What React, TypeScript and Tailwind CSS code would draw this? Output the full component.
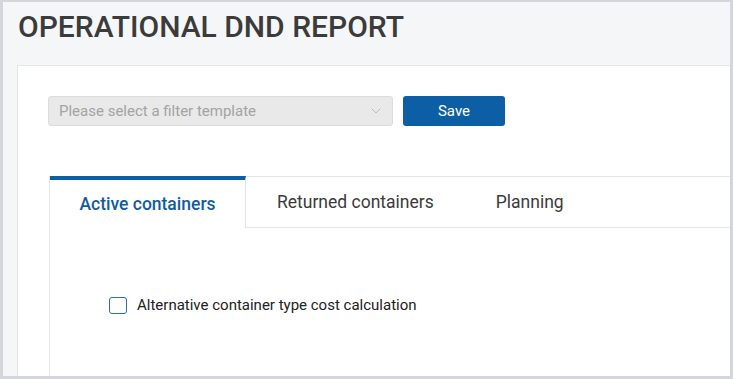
import { ChevronDown } from "lucide-react";

const tabs = ["Active containers", "Returned containers", "Planning"];

export default function App() {
  return (
    <div
      className="w-[733px] h-[379px] overflow-hidden flex flex-col bg-[#f5f6f8] border-[#d3d6da] border-t-[2px] border-l-[3px] border-r-[3px] border-b-[3px]"
      style={{ fontFamily: "Roboto, 'Liberation Sans', sans-serif" }}
    >
      {/* Page title */}
      <h1 className="pl-[15px] pt-[7px] mb-[20px] text-[30px] leading-[36px] font-medium text-[#3b3b3b]">
        OPERATIONAL DND REPORT
      </h1>

      {/* Report panel */}
      <div className="ml-[14px] flex-1 flex flex-col bg-white border-l border-t border-[#e3e6ea] pl-[30px] pt-[30px]">
        <div className="flex items-center gap-[10px]">
          <div className="w-[345px] h-[30px] flex items-center justify-between pl-[10px] pr-[8px] bg-[#e9e9e9] border border-[#dcdcdc] rounded-[3px]">
            <span className="text-[15px] text-[#a3a3a3]">Please select a filter template</span>
            <ChevronDown className="w-[16px] h-[16px] text-[#bdbdbd]" strokeWidth={1.5} />
          </div>
          <button className="w-[102px] h-[30px] rounded-[3px] bg-[#0c5fa4] text-white text-[15px]">
            Save
          </button>
        </div>

        {/* Tabs */}
        <div className="mt-[50px] ml-px flex-1 flex flex-col border-l border-[#e3e6ea]">
          <div className="flex h-[52px]">
            <div className="w-[196px] flex items-center justify-center border-t-[4px] border-t-[#0c5fa4] border-r border-r-[#e3e6ea] text-[17.5px] font-medium text-[#115c9e]">
              {tabs[0]}
            </div>
            {tabs.slice(1).map((t) => (
              <div
                key={t}
                className="px-[31px] flex items-center border-t border-b border-[#e3e6ea] text-[17.5px] text-[#3b3b3b]"
              >
                {t}
              </div>
            ))}
            <div className="flex-1 border-t border-b border-[#e3e6ea]" />
          </div>

          <div className="pl-[59px] pt-[66px]">
            <label className="flex items-center gap-[10px]">
              <span className="w-[18px] h-[17px] rounded-[3px] border-[1.5px] border-[#2a6db3] bg-white" />
              <span className="text-[15px] text-[#222]">Alternative container type cost calculation</span>
            </label>
          </div>
        </div>
      </div>
    </div>
  );
}
